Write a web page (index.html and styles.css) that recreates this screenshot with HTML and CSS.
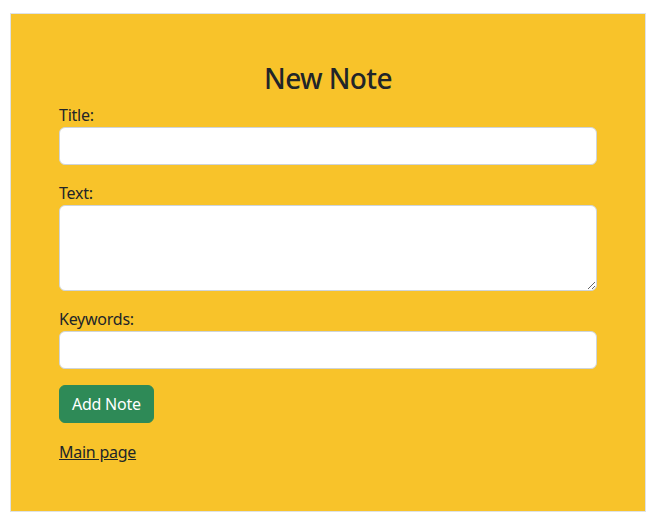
FILE: index.html
```html
<!DOCTYPE html>
<html>
<head>
<meta charset="utf-8">
<link rel="stylesheet" href="styles.css">
</head>
<body>
<div class="card">
  <h3 class="title">New Note</h3>
  <form class="form">
    <div class="field">
      <label class="label">Title:</label>
      <input class="input" type="text">
    </div>
    <div class="field">
      <label class="label">Text:</label>
      <textarea class="input area"></textarea>
    </div>
    <div class="field">
      <label class="label">Keywords:</label>
      <input class="input" type="text">
    </div>
    <div class="actions">
      <button class="btn" type="button">Add Note</button>
    </div>
  </form>
  <a class="link" href="#">Main page</a>
</div>
</body>
</html>
```
FILE: styles.css
```css
html, body { margin: 0; padding: 0; background: #fff; }
body {
  font-family: "Noto Sans", "Open Sans", sans-serif;
  font-size: 16px;
  line-height: 24px;
  letter-spacing: -0.25px;
  color: #212529;
  padding: 13px 14px 0 10px;
}
.card {
  background: #f8c32a;
  border: 1px solid #dee2e6;
  padding: 47px 48px 47px 48px;
  display: flex;
  flex-direction: column;
  align-items: flex-start;
}
.title {
  align-self: stretch;
  text-align: center;
  font-size: 28px;
  font-weight: 500;
  line-height: 34px;
  letter-spacing: -0.6px;
  margin: 0 0 8px 0;
}
.form { align-self: stretch; display: flex; flex-direction: column; gap: 16px; }
.field { display: flex; flex-direction: column; }
.label { display: block; }
.input {
  box-sizing: border-box;
  width: 100%;
  height: 38px;
  border: 1px solid #ced4da;
  border-radius: 6px;
  background: #fff;
  margin: 0;
  font: inherit;
  padding: 6px 12px;
}
.area { height: 86px; resize: vertical; display: block; }
.actions { display: flex; }
.btn {
  height: 38px;
  padding: 0 12px;
  background: #2e8a57;
  color: #fff;
  border: 1px solid #2e8a57;
  border-radius: 6px;
  font: inherit;
  letter-spacing: -0.25px;
}
.link {
  margin-top: 17px;
  color: #212529;
  text-decoration: underline;
}
```
